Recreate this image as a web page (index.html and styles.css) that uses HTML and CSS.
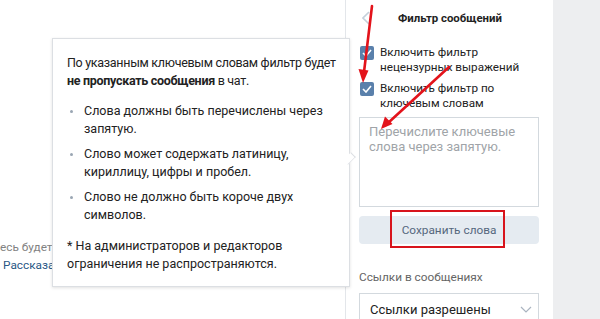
FILE: index.html
```html
<!DOCTYPE html>
<html lang="ru">
<head>
<meta charset="utf-8">
<link rel="stylesheet" href="styles.css">
</head>
<body>
<div class="page">
  <div class="left">
    <div class="bg-text">
      <div class="bg-gray">есь будет</div>
      <div class="bg-link">Рассказать</div>
    </div>
    <div class="popover">
      <p class="intro">По указанным ключевым словам фильтр будет<br><b>не пропускать сообщения</b> в чат.</p>
      <ul class="rules">
        <li>Слова должны быть перечислены через<br>запятую.</li>
        <li>Слово может содержать латиницу,<br>кириллицу, цифры и пробел.</li>
        <li>Слово не должно быть короче двух<br>символов.</li>
      </ul>
      <p class="note">* На администраторов и редакторов<br>ограничения не распространяются.</p>
      <span class="tail"></span>
    </div>
  </div>
  <div class="panel">
    <div class="head">
      <svg class="back" width="8" height="14" viewBox="0 0 8 14"><path d="M7 1 1 7l6 6" fill="none" stroke="#c5d0db" stroke-width="1.6"/></svg>
      <div class="title">Фильтр сообщений</div>
    </div>
    <label class="check">
      <span class="box"><svg width="10" height="8" viewBox="0 0 10 8"><path d="M1 4l3 3 5-6" fill="none" stroke="#fff" stroke-width="1.6"/></svg></span>
      <span class="ctext">Включить фильтр<br>нецензурных выражений</span>
    </label>
    <label class="check">
      <span class="box"><svg width="10" height="8" viewBox="0 0 10 8"><path d="M1 4l3 3 5-6" fill="none" stroke="#fff" stroke-width="1.6"/></svg></span>
      <span class="ctext">Включить фильтр по<br>ключевым словам</span>
    </label>
    <div class="area">Перечислите ключевые<br>слова через запятую.</div>
    <div class="btn"><span class="btn-label">Сохранить слова</span><span class="mark"></span></div>
    <div class="sub">Ссылки в сообщениях</div>
    <div class="select">
      <span>Ссылки разрешены</span>
      <svg width="12" height="7" viewBox="0 0 12 7"><path d="M1 1l5 5 5-5" fill="none" stroke="#aab4c0" stroke-width="1.2"/></svg>
    </div>
  </div>
  <div class="right"></div>
</div>
<svg class="arrows" width="600" height="319" viewBox="0 0 600 319">
  <g stroke="#e3131b" stroke-width="2.6" fill="none" stroke-linecap="round">
    <path d="M372 6 L364 72"/>
    <path d="M449 67 L388 123"/>
  </g>
  <g fill="#e3131b">
    <path d="M363 83 L358.5 69 L368.5 70.5 Z"/>
    <path d="M381 129 L385 116.5 L392.5 124 Z"/>
  </g>
</svg>
</body>
</html>
```
FILE: styles.css
```css
html, body {
  margin: 0;
  padding: 0;
}
body {
  width: 600px;
  height: 319px;
  overflow: hidden;
  background: #fff;
  font-family: Roboto, "Liberation Sans", sans-serif;
  font-size: 13px;
  color: #000;
  position: relative;
}
.page {
  display: flex;
  height: 319px;
}
.left {
  width: 345px;
  flex: none;
  position: relative;
}
.bg-text {
  padding-top: 238px;
  line-height: 18px;
  font-size: 11.8px;
  white-space: nowrap;
}
.bg-gray {
  color: #828282;
}
.bg-link {
  color: #2a5885;
  padding-left: 3px;
}
.popover {
  position: absolute;
  left: 52px;
  top: 38px;
  width: 282px;
  padding: 15px 0 13px 14px;
  background: #fff;
  border: 1px solid #dcdfe3;
  box-shadow: 0 1px 3px rgba(0,0,0,0.12);
  font-size: 12.5px;
  line-height: 18px;
  color: #222;
  white-space: nowrap;
  z-index: 2;
}
.popover p {
  margin: 0;
}
.intro {
  letter-spacing: -0.3px;
}
.intro b {
  font-weight: 700;
}
.rules {
  list-style: none;
  margin: 12px 0 0;
  padding: 0 0 0 17px;
}
.rules li {
  position: relative;
  margin-bottom: 7px;
}
.rules li::before {
  content: "";
  position: absolute;
  left: -14px;
  top: 8px;
  width: 3px;
  height: 3px;
  background: #9aa6b3;
  border-radius: 50%;
}
.note {
  margin-top: 13px !important;
}
.tail {
  position: absolute;
  right: -6px;
  top: 114px;
  width: 10px;
  height: 10px;
  background: #fff;
  border-top: 1px solid #dcdfe3;
  border-right: 1px solid #dcdfe3;
  transform: rotate(45deg) scaleX(0.6);
}
.panel {
  flex: none;
  border-left: 1px solid #e3e6ea;
  padding: 0 14px 0 13px;
  width: 180px;
}
.head {
  position: relative;
  height: 36px;
  display: flex;
  align-items: center;
  justify-content: center;
}
.back {
  position: absolute;
  left: 3px;
  top: 11px;
}
.title {
  font-weight: 700;
  font-size: 11.4px;
  padding-left: 2px;
  color: #222;
}
.check {
  display: flex;
  gap: 6px;
  margin-top: 9px;
  line-height: 14.5px;
  font-size: 11.7px;
  color: #222;
}
.check + .check {
  margin-top: 7px;
}
.box {
  width: 14px;
  height: 14px;
  flex: none;
  margin-top: 1px;
  margin-left: 1px;
  border-radius: 2px;
  background: #5a80ab;
  display: flex;
  align-items: center;
  justify-content: center;
}
.area {
  margin-top: 7px;
  height: 74px;
  border: 1px solid #d3d9de;
  padding: 6px 9px 8px;
  color: #a0a4a8;
  line-height: 15px;
}
.btn {
  position: relative;
  margin-top: 9px;
  height: 28px;
  background: #e5ebf1;
  border-radius: 4px;
  display: flex;
  align-items: center;
  justify-content: center;
  font-size: 11.8px;
  color: #55677d;
}
.mark {
  position: absolute;
  left: 31px;
  top: -6px;
  width: 111px;
  height: 34px;
  border: 2px solid #d8141c;
}
.sub {
  margin-top: 26px;
  font-size: 11.8px;
  color: #656565;
  line-height: 15px;
}
.select {
  margin-top: 8px;
  height: 30px;
  border: 1px solid #d3d9de;
  display: flex;
  align-items: center;
  justify-content: space-between;
  padding: 0 6px 0 10px;
  color: #222;
}
.right {
  flex: 1;
  background: #edeef0;
}
.arrows {
  position: absolute;
  left: 0;
  top: 0;
  pointer-events: none;
  z-index: 5;
}
```
